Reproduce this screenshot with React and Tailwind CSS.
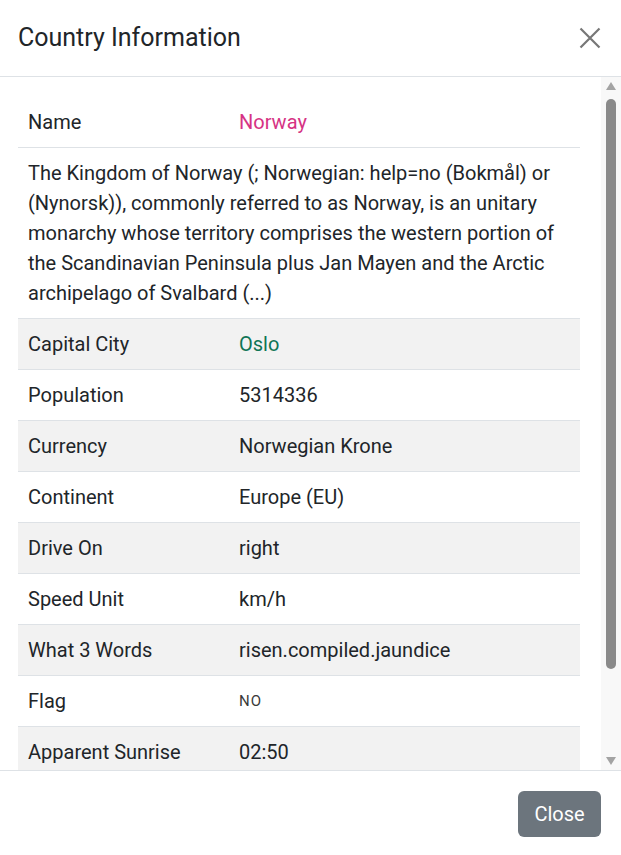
import React from 'react';

const rows = [
  { label: 'Capital City', value: 'Oslo', cls: 'text-[#0f7556]' },
  { label: 'Population', value: '5314336' },
  { label: 'Currency', value: 'Norwegian Krone' },
  { label: 'Continent', value: 'Europe (EU)' },
  { label: 'Drive On', value: 'right' },
  { label: 'Speed Unit', value: 'km/h' },
  { label: 'What 3 Words', value: 'risen.compiled.jaundice' },
  { label: 'Flag', value: 'NO', cls: 'text-[15px] tracking-[1px] text-[#3a3a3a]' },
  { label: 'Apparent Sunrise', value: '02:50' },
];

function Row({ label, value, cls, striped }) {
  return (
    <div className={`grid grid-cols-[211px_1fr] border-t border-[#dee2e6] ${striped ? 'bg-[#f2f2f2]' : 'bg-white'}`}>
      <div className="px-[10px] py-[10px] leading-[30px]">{label}</div>
      <div className={`px-[10px] py-[10px] leading-[30px] ${cls || ''}`}>{value}</div>
    </div>
  );
}

export default function App() {
  return (
    <div className="w-[621px] h-[855px] bg-white text-[#212529] text-[20px] font-['Roboto',sans-serif] flex flex-col overflow-hidden">
      <div className="h-[77px] shrink-0 border-b border-[#dee2e6] flex items-center justify-between pl-[18px] pr-[20px]">
        <h5 className="text-[25px] leading-none pb-[2px]">Country Information</h5>
        <svg width="22" height="22" viewBox="0 0 22 22" className="text-[#777]">
          <path d="M1.5 1.5 L20.5 20.5 M20.5 1.5 L1.5 20.5" stroke="currentColor" strokeWidth="2.2" fill="none" />
        </svg>
      </div>

      <div className="flex-1 flex min-h-0">
        <div className="flex-1 overflow-hidden pl-[18px] pr-[21px] pt-[20px]">
          <div className="grid grid-cols-[211px_1fr]">
            <div className="px-[10px] py-[10px] leading-[30px]">Name</div>
            <div className="px-[10px] py-[10px] leading-[30px] text-[#d63384]">Norway</div>
          </div>
          <div className="border-t border-[#dee2e6] px-[10px] py-[10px] leading-[30px]">
            The Kingdom of Norway (; Norwegian: help=no (Bokmål) or (Nynorsk)), commonly referred to as Norway, is an unitary monarchy whose territory comprises the western portion of the Scandinavian Peninsula plus Jan Mayen and the Arctic archipelago of Svalbard (...)
          </div>
          {rows.map((r, i) => (
            <Row key={r.label} {...r} striped={i % 2 === 0} />
          ))}
        </div>
        <div className="w-[20px] shrink-0 bg-[#f8f8f8] flex flex-col items-center pt-[5px] pb-[5px]">
          <svg width="10" height="8" viewBox="0 0 10 8" className="shrink-0">
            <path d="M5 0 L10 8 L0 8 Z" fill="#a3a3a3" />
          </svg>
          <div className="w-[10px] h-[570px] mt-[9px] rounded-full bg-[#8a8a8a]" />
          <div className="flex-1" />
          <svg width="10" height="8" viewBox="0 0 10 8" className="shrink-0">
            <path d="M0 0 L10 0 L5 8 Z" fill="#a3a3a3" />
          </svg>
        </div>
      </div>

      <div className="h-[85px] shrink-0 border-t border-[#dee2e6] flex items-center justify-end pr-[20px] pt-[2px]">
        <button className="w-[83px] h-[46px] rounded-[6px] bg-[#6c757d] text-white text-[20px] leading-none">Close</button>
      </div>
    </div>
  );
}
